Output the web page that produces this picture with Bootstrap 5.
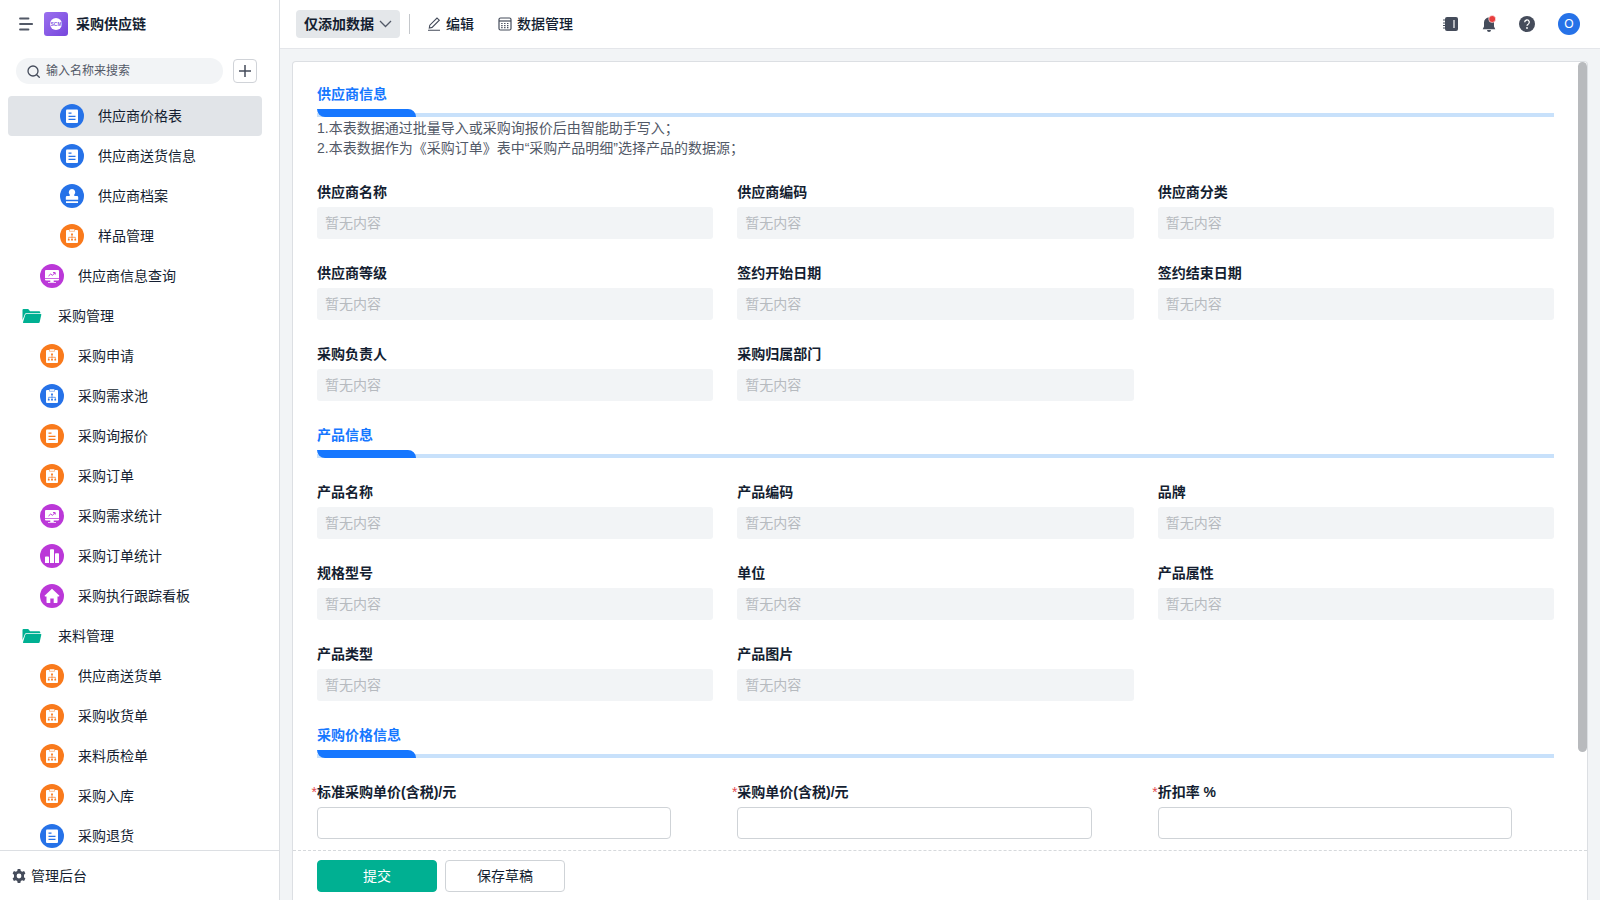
<!DOCTYPE html>
<html lang="zh-CN">
<head>
<meta charset="utf-8">
<meta name="viewport" content="width=device-width, initial-scale=1">
<title>采购供应链</title>
<link href="https://cdn.jsdelivr.net/npm/bootstrap@5.3.0/dist/css/bootstrap.min.css" rel="stylesheet">
<style>
:root{--ink:#141e31;--muted:#525967;--line:#dcdfe3;--soft:#f2f4f6;--blue:#1677ff;--green:#00b092}
body{font-family:"Liberation Sans","Noto Sans CJK SC",sans-serif;font-size:14px;line-height:20px;color:var(--ink);background:#f2f4f6}
.fw-label{font-weight:600}
a{color:inherit;text-decoration:none}
.sidebar{width:280px;border-right:1px solid var(--line)}
.brand-bar{height:48px;padding-left:19px}
.brand-logo{margin:0 8px 0 11px}
.search-row{height:46px;padding:0 22px 0 16px;gap:10px}
.search-pill{height:26px;background:var(--soft);padding:0 11px;gap:6px}
.search-pill input{font-size:12px;line-height:18px;color:var(--muted)}
.search-pill input::placeholder{color:var(--muted);opacity:1}
.add-btn{width:24px;height:24px;border:1px solid #d0d3d8;border-radius:4px;background:#fff;padding:0}
.tree{padding:2px 17px 0 8px}
.tree a{height:40px;border-radius:4px;gap:14px}
.tree a.active{background:#e1e4e8}
.lv1{padding-left:12px}.lv2{padding-left:32px}.lv3{padding-left:52px}
.side-foot{height:50px;border-top:1px solid var(--line);padding-left:11px;gap:4px}
.topbar{height:49px;border-bottom:1px solid #e4e6ea;padding:0 20px 0 16px}
.topbar .vr{height:20px;margin:0 17px 0 9px}
.top-tools{gap:23px}
.mode-btn{height:28px;background:#e4e7ea;border:0;border-radius:4px;padding:0 8px;gap:5px;color:var(--ink)}
.plain-btn{border:0;background:none;padding:0;gap:5px;color:var(--ink)}
.text-btn{font-weight:500}
.avatar-dot{width:22px;height:22px;background:#2672e8;color:#fff;font-size:12px;border:0;padding:0}
.sheet{margin:12px 12px 0;background:#fff;border:1px solid var(--line);border-bottom:0;border-radius:4px 4px 0 0}
.sheet-scroll{overflow-y:auto;scrollbar-width:none;padding:22px 33px 24px 24px}
.sheet-scroll::-webkit-scrollbar{display:none}
.thumb{top:0;right:0;width:9px;height:690px;border-radius:5px;background:#b8babd}
.sec-title{font-size:14px;line-height:20px;font-weight:600;color:var(--blue);margin:0 0 5px}
.sec-bar{height:8px;background:linear-gradient(#c8e1fb,#c8e1fb) bottom/100% 4px no-repeat}
.sec-bar::before{content:"";display:block;width:99px;height:8px;background:var(--blue);border-radius:0 8px 0 8px}
.note{color:#525967;margin:1px 0 0}
.fields{display:grid;grid-template-columns:repeat(3,minmax(0,1fr));gap:24px;margin:24px 0}
.fields label{display:block;font-weight:600;margin-bottom:5px;position:relative}
.req::before{content:"*";position:absolute;right:100%;color:#e5484d;font-weight:400}
.fields input{display:block;width:100%;height:32px;padding:0 8px;border:0;border-radius:3px;background:var(--soft);font-size:14px;line-height:20px;color:var(--ink)}
.fields input::placeholder{color:#b6babf;opacity:1}
.fields input.entry{width:calc(100% - 42px);background:#fff;border:1px solid #cfd3d7;border-radius:4px}
.sheet-foot{height:50px;border-top:1px dashed #d6d9dc;padding:9px 24px 8px;gap:8px}
.act{width:120px;height:32px;padding:0;font-size:14px;line-height:20px;border-radius:4px;border:1px solid #cfd3d7;background:#fff;color:var(--ink)}
.act.main-act{background:var(--green);border-color:var(--green);color:#fff}
</style>
</head>
<body>
<svg width="0" height="0" class="position-absolute" aria-hidden="true">
<symbol id="doc" viewBox="0 0 24 24"><circle cx="12" cy="12" r="12"/><rect x="6" y="5.500" width="12" height="13.500" rx="1" fill="#fff"/><path d="M8.500 9.200h3M8.500 12.300h7M8.500 15.400h7" stroke="currentColor" stroke-width="1.200"/></symbol>
<symbol id="flow" viewBox="0 0 24 24"><circle cx="12" cy="12" r="12"/><path d="M7 6h2.600V5.200h4.800V6H17a1 1 0 0 1 1 1v11a1 1 0 0 1-1 1H7a1 1 0 0 1-1-1V7a1 1 0 0 1 1-1z" fill="#fff"/><path d="M9.500 6v1.300h5V6" fill="none" stroke="currentColor" stroke-width=".5"/><path d="M12 10.500v4.500M8.700 15v-1.700h6.600V15" fill="none" stroke="currentColor" stroke-width=".7"/><path d="M11.100 9.500h1.800v1.700h-1.800zM7.900 14.900h1.700v1.700H7.900zM11.100 14.900h1.800v1.700h-1.800zM14.400 14.900h1.700v1.700h-1.700z"/></symbol>
<symbol id="stamp" viewBox="0 0 24 24"><circle cx="12" cy="12" r="12"/><path d="M12 5a3.300 3.300 0 0 1 2.300 5.600V12H17a1.200 1.200 0 0 1 1.200 1.200v2.600H5.800v-2.600A1.200 1.200 0 0 1 7 12h2.700v-1.400A3.300 3.300 0 0 1 12 5zM6 17.300h12v1.600H6z" fill="#fff"/></symbol>
<symbol id="screen" viewBox="0 0 24 24"><circle cx="12" cy="12" r="12"/><path d="M6 6h12a1 1 0 0 1 1 1v7H5V7a1 1 0 0 1 1-1zM5 14.800h14v.8a1 1 0 0 1-1 1h-4.300V18H16v.8H8V18h2.300v-1.400H6a1 1 0 0 1-1-1z" fill="#fff"/><path d="M8.500 12l2.200-2 1.600 1.300 2.700-2.500M13 8.600h2.200v2" fill="none" stroke="currentColor" stroke-width="1"/></symbol>
<symbol id="bars" viewBox="0 0 24 24"><circle cx="12" cy="12" r="12"/><path d="M5 13.300a.8.800 0 0 1 .8-.8h2.400a.8.800 0 0 1 .8.8V19H5zM10 6a.8.800 0 0 1 .8-.8h2.400a.8.800 0 0 1 .8.8v13h-4zM15 10a.8.800 0 0 1 .8-.8h2.400a.8.800 0 0 1 .8.800v9h-4z" fill="#fff"/></symbol>
<symbol id="home" viewBox="0 0 24 24"><circle cx="12" cy="12" r="12"/><path d="M12 4.800l7.200 6.700a.5.500 0 0 1-.3.900H17.500v5.800a.8.800 0 0 1-.8.800h-3v-4.500h-3.400V19h-3a.8.800 0 0 1-.8-.8v-5.800H5.100a.5.500 0 0 1-.3-.9z" fill="#fff"/></symbol>
<symbol id="folder" viewBox="0 0 24 24"><path d="M2.500 6a1 1 0 0 1 1-1h4.700l1.900 2.200H19a1.300 1.300 0 0 1 1.300 1.300v.8H6.200a1.500 1.500 0 0 0-1.400 1L2.500 16z"/><path d="M6.500 10h14.200a.6.600 0 0 1 .6.800l-1.600 7.300a1.200 1.200 0 0 1-1.200 1H3.600a.6.600 0 0 1-.6-.8l2.200-7.400A1.300 1.300 0 0 1 6.500 10z"/></symbol>
</svg>
<div class="d-flex vh-100 overflow-hidden">
<aside class="sidebar bg-white d-flex flex-column flex-shrink-0">
  <header class="brand-bar d-flex align-items-center flex-shrink-0">
    <button class="plain-btn d-flex" aria-label="菜单"><svg width="14" height="14" fill="none" stroke="#525967" stroke-width="1.800" stroke-linecap="round"><path d="M1 1.500h8.500M1 7h12.200M1 12.500h8.500"/></svg></button>
    <svg class="brand-logo" width="24" height="24" viewBox="0 0 24 24"><defs><linearGradient id="lg" x2="1" y2="1"><stop stop-color="#9b70ef"/><stop offset="1" stop-color="#7646dc"/></linearGradient></defs><rect width="24" height="24" rx="3" fill="url(#lg)"/><circle cx="12" cy="12" r="6" fill="#fff"/><text x="12" y="13.800" text-anchor="middle" font-size="5" font-weight="700" fill="#8558e4">SCM</text></svg>
    <span class="fw-label">采购供应链</span>
  </header>
  <div class="search-row d-flex align-items-center flex-shrink-0">
    <label class="search-pill rounded-pill d-flex align-items-center flex-fill">
      <svg width="13" height="13" class="flex-shrink-0" fill="none" stroke="#454c5b" stroke-width="1.300" stroke-linecap="round"><circle cx="6" cy="6" r="5"/><path d="M9.700 9.700l2.600 2.600"/></svg>
      <input class="border-0 bg-transparent p-0 w-100" type="text" placeholder="输入名称来搜索" aria-label="输入名称来搜索">
    </label>
    <button class="add-btn d-flex align-items-center justify-content-center" aria-label="添加"><svg width="14" height="14" class="flex-shrink-0" stroke="#454c5b" stroke-width="1.500"><path d="M1 7h12M7 1v12"/></svg></button>
  </div>
  <nav class="tree flex-fill overflow-hidden" id="tree"></nav>
  <a href="#" class="side-foot d-flex align-items-center flex-shrink-0"><svg width="16" height="16" viewBox="0 0 16 16" fill="#454c5b" fill-rule="evenodd"><path d="M6.700 1h2.600l.5 1.900 1.400.8 1.900-.6 1.300 2.300L13 6.800v2.400l1.400 1.400-1.300 2.300-1.900-.6-1.400.8-.5 1.900H6.700l-.5-1.900-1.400-.8-1.900.6-1.300-2.300L3 9.200V6.800L1.600 5.400l1.300-2.300 1.900.6 1.400-.8zM8 5.600a2.400 2.400 0 1 0 0 4.800 2.400 2.400 0 0 0 0-4.800z"/></svg><span>管理后台</span></a>
</aside>
<div class="d-flex flex-column flex-fill overflow-hidden">
  <header class="topbar bg-white d-flex align-items-center flex-shrink-0">
    <button class="mode-btn d-flex align-items-center fw-label">仅添加数据<svg width="13" height="8" fill="none" stroke="#525967" stroke-width="1.300"><path d="M1 1l5.500 5.500L12 1"/></svg></button>
    <div class="vr align-self-center"></div>
    <button class="plain-btn text-btn d-flex align-items-center"><svg width="14" height="14" fill="none" stroke="#454c5b" stroke-width="1.100"><path d="M1 13.300h12M2.300 11l.5-2.800L10 1l2.300 2.200-7.200 7.200z"/></svg>编辑</button>
    <button class="plain-btn text-btn d-flex align-items-center ms-4"><svg width="14" height="14" fill="none" stroke="#454c5b" stroke-width="1.200"><rect x="1" y="1" width="12" height="12" rx="1.500"/><path d="M1 4h12"/><path d="M3.200 6.500h8M3.200 8.600h8M3.200 10.700h8" stroke-dasharray="1.400 1.500"/></svg>数据管理</button>
    <div class="top-tools d-flex align-items-center ms-auto">
      <button class="plain-btn d-flex" aria-label="通讯录"><svg width="16" height="16"><rect x="2" y="1" width="13" height="14" rx="2" fill="#454c5b"/><path d="M0 4h3M0 7h3M0 9.500h3M0 12h3" stroke="#454c5b"/><path d="M11 4v8" stroke="#fff" stroke-width="1.200"/></svg></button>
      <button class="plain-btn d-flex" aria-label="通知"><svg width="14" height="18" viewBox="0 0 14 18"><path d="M7 2.500a5 5 0 0 1 5 5v4l1.300 2.700H.7L2 11.500v-4a5 5 0 0 1 5-5zM5 15h4a2 2 0 0 1-4 0z" fill="#454c5b"/><circle cx="10.200" cy="4" r="3.500" fill="#e83e3e" stroke="#fff" stroke-width=".6"/></svg></button>
      <button class="plain-btn d-flex" aria-label="帮助"><svg width="16" height="16"><circle cx="8" cy="8" r="8" fill="#454c5b"/><path d="M5.700 6.300a2.300 2.300 0 1 1 3.400 2c-.8.400-1.100.8-1.100 1.500" fill="none" stroke="#fff" stroke-width="1.300"/><circle cx="8" cy="12" r=".9" fill="#fff"/></svg></button>
      <button class="avatar-dot rounded-circle" aria-label="账户">O</button>
    </div>
  </header>
  <main class="sheet position-relative d-flex flex-column flex-fill overflow-hidden">
    <form class="sheet-scroll flex-fill" id="form"></form>
    <div class="thumb position-absolute"></div>
    <footer class="sheet-foot d-flex flex-shrink-0">
      <button class="act main-act" type="submit" form="form">提交</button>
      <button class="act" type="button">保存草稿</button>
    </footer>
  </main>
</div>
</div>
<script src="https://cdn.jsdelivr.net/npm/bootstrap@5.3.0/dist/js/bootstrap.bundle.min.js"></script>
<script>
const B='#2672e8',O='#f97a1c',P='#bb38d8',G='#00b092';
const items=[[3,'doc',B,'供应商价格表'],[3,'doc',B,'供应商送货信息'],[3,'stamp',B,'供应商档案'],[3,'flow',O,'样品管理'],[2,'screen',P,'供应商信息查询'],[1,'folder',G,'采购管理'],[2,'flow',O,'采购申请'],[2,'flow',B,'采购需求池'],[2,'doc',O,'采购询报价'],[2,'flow',O,'采购订单'],[2,'screen',P,'采购需求统计'],[2,'bars',P,'采购订单统计'],[2,'home',P,'采购执行跟踪看板'],[1,'folder',G,'来料管理'],[2,'flow',O,'供应商送货单'],[2,'flow',O,'采购收货单'],[2,'flow',O,'来料质检单'],[2,'flow',O,'采购入库'],[2,'doc',B,'采购退货']];
document.getElementById('tree').innerHTML=items.map(([l,i,c,t],n)=>`<a href="#" class="d-flex align-items-center lv${l}${n?'':' active'}"><svg width="24" height="24" fill="${c}" color="${c}"><use href="#${i}"/></svg><span>${t}</span></a>`).join('');
const sections=[
 ['供应商信息',['供应商名称','供应商编码','供应商分类','供应商等级','签约开始日期','签约结束日期','采购负责人','采购归属部门'],'1.本表数据通过批量导入或采购询报价后由智能助手写入；<br>2.本表数据作为《采购订单》表中“采购产品明细”选择产品的数据源；'],
 ['产品信息',['产品名称','产品编码','品牌','规格型号','单位','产品属性','产品类型','产品图片']],
 ['采购价格信息',['标准采购单价(含税)/元','采购单价(含税)/元','折扣率 %']]];
document.getElementById('form').innerHTML=sections.map(([t,f,note],s)=>`<section><h2 class="sec-title">${t}</h2><div class="sec-bar"></div>${note?`<p class="note">${note}</p>`:''}<div class="fields">${f.map((x,i)=>`<div><label for="f${s}-${i}"${s==2?' class="req"':''}>${x}</label><input id="f${s}-${i}" type="text" ${s==2?'class="entry" required':'placeholder="暂无内容" readonly'}></div>`).join('')}</div></section>`).join('');
</script>
</body>
</html>
